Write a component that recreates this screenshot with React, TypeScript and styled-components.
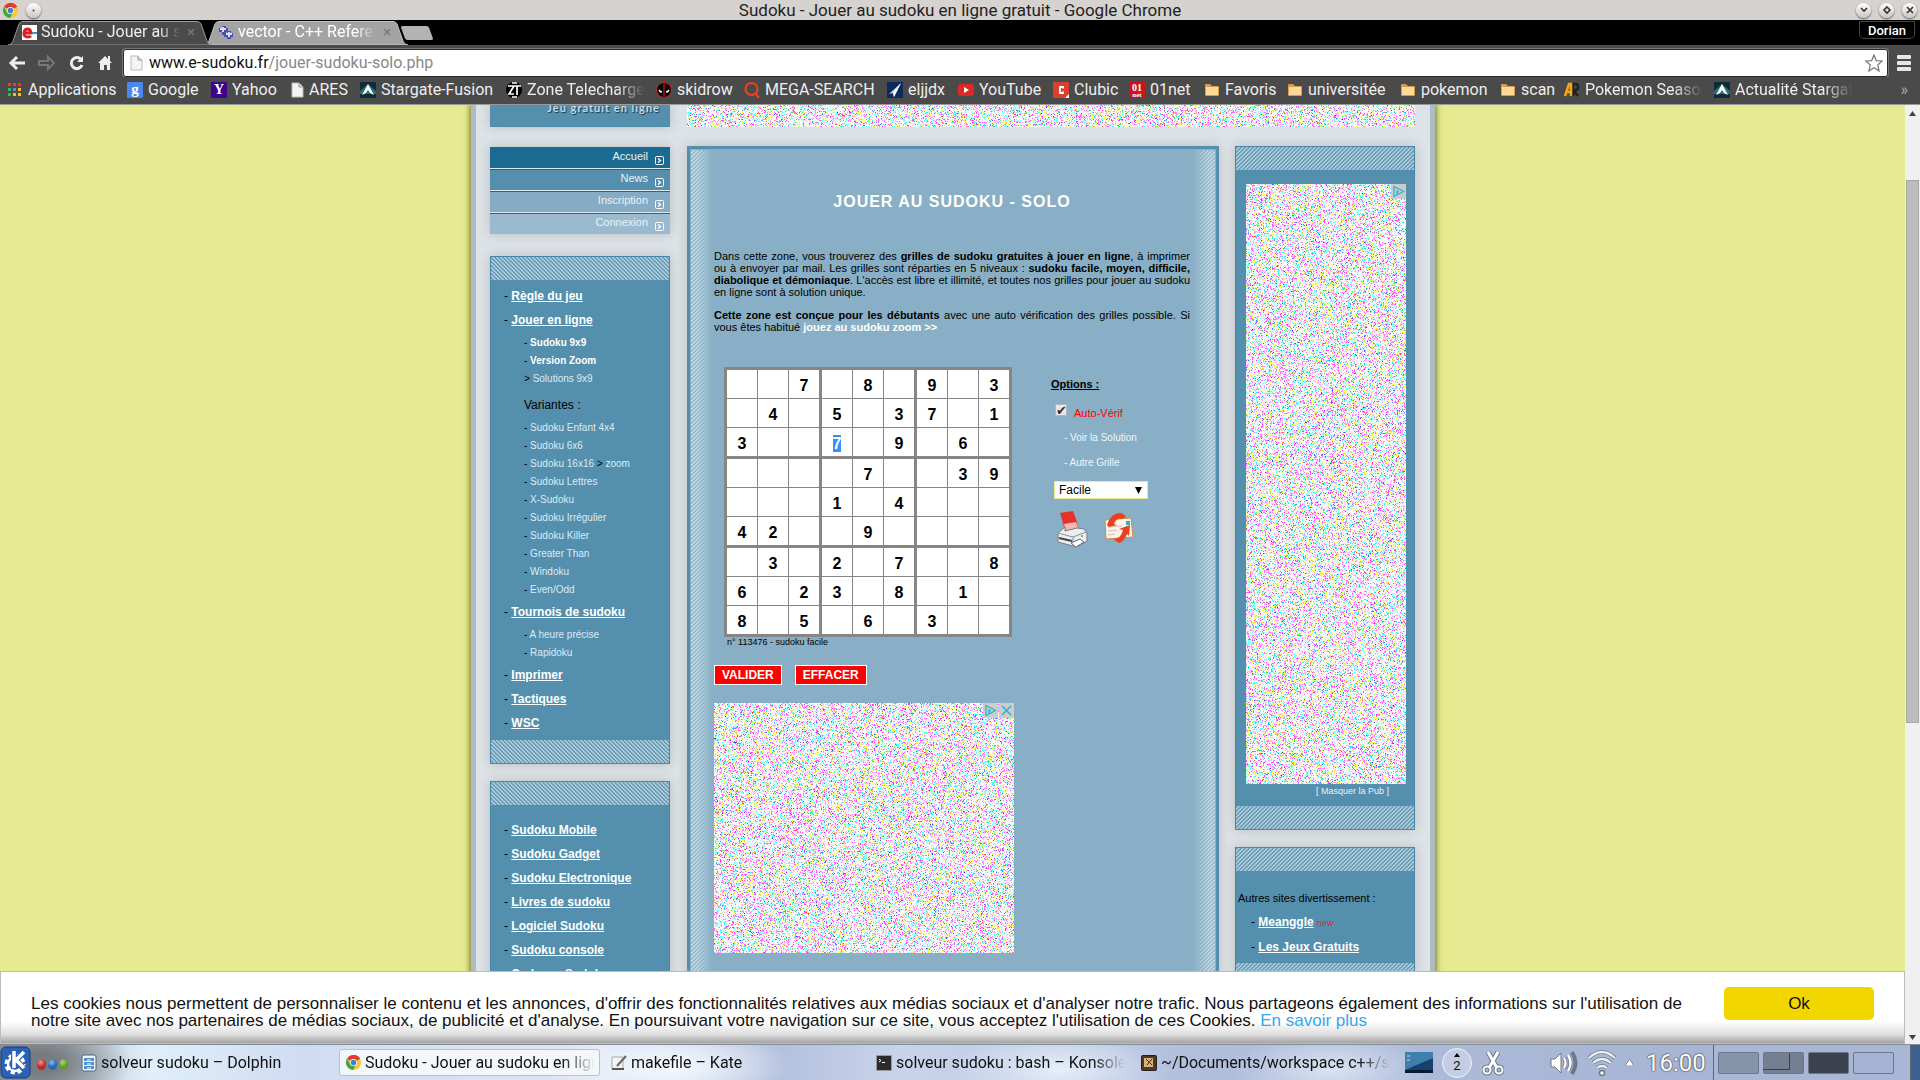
import React, { useEffect, useRef } from "react";
import styled, { createGlobalStyle, css } from "styled-components";

const UI = `Roboto, "Noto Sans", sans-serif`;
const WEB = `"Liberation Sans", Arial, sans-serif`;
const BLUE = "#548fad";

const Global = createGlobalStyle`
  * { box-sizing: border-box; }
  html, body, #root { height: 100%; margin: 0; }
  body { overflow: hidden; font-family: ${WEB}; background: #e6ea90; }
  ul, p, h1 { margin: 0; padding: 0; }
  ul { list-style: none; }
  button { font-family: inherit; padding: 0; border: 0; background: none; }
  svg { display: block; flex: none; }
`;

const Desktop = styled.div`
  display: flex;
  flex-direction: column;
  height: 100vh;
`;

/* ---------- window frame ---------- */

const TitleBar = styled.header`
  flex: none;
  display: grid;
  grid-template-columns: 1fr auto 1fr;
  align-items: center;
  height: 20px;
  padding: 0 3px;
  background: #d6d2cf;
  color: #222;
  font: 17px/20px ${UI};
`;

const TitleSide = styled.div<{ $end?: boolean }>`
  display: flex;
  align-items: center;
  gap: 8px;
  justify-content: ${(p) => (p.$end ? "flex-end" : "flex-start")};
`;

const RoundButton = styled.button`
  display: grid;
  place-items: center;
  width: 15px;
  height: 15px;
  border-radius: 50%;
  background: linear-gradient(#fff, #c9c5c2);
  box-shadow: 0 1px 2px #555;
`;

const TabStrip = styled.nav`
  flex: none;
  display: flex;
  height: 25px;
  padding: 1px 5px 0 8px;
  background: #000;
`;

const Tab = styled.div<{ $active?: boolean }>`
  position: relative;
  z-index: ${(p) => (p.$active ? 1 : 0)};
  display: flex;
  align-items: center;
  gap: 4px;
  width: 204px;
  height: 24px;
  margin-right: -8px;
  padding: 0 14px 2px 14px;
  color: ${(p) => (p.$active ? "#eee" : "#fff")};
  font: 16px/22px ${UI};
`;

const TabShape = styled.svg`
  position: absolute;
  inset: 0;
  z-index: -1;
`;

const TabText = styled.a`
  flex: 1;
  overflow: hidden;
  white-space: nowrap;
  color: inherit;
  text-decoration: none;
  mask-image: linear-gradient(90deg, #000 85%, transparent);
`;

const TabClose = styled.button`
  width: 14px;
  color: #777;
  font-size: 15px;
  line-height: 20px;
`;

const NewTab = styled.button`
  width: 28px;
  height: 14px;
  margin: 5px 0 0 3px;
  border-radius: 2px;
  background: #b3b3b3;
  transform: skewX(20deg);
`;

const UserBadge = styled.button`
  width: 56px;
  height: 18px;
  margin-left: auto;
  border: 1px solid #444;
  border-radius: 0 0 5px 5px;
  color: #fff;
  font: 500 13px/15px ${UI};
`;

const Toolbar = styled.div`
  flex: none;
  display: flex;
  align-items: center;
  height: 32px;
  padding: 3px 8px 0 8px;
  background: #4a4a4a;
`;

const NavButtons = styled.div`
  display: flex;
  gap: 12px;
  width: 115px;
`;

const UrlBox = styled.div`
  flex: 1;
  display: flex;
  align-items: center;
  gap: 6px;
  height: 28px;
  padding: 0 4px 0 6px;
  border: 1px solid #2c2c2c;
  border-radius: 3px;
  background: #fff;
  box-shadow: 0 0 0 1px #777;
  color: #888;
  font: 16px/24px ${UI};
`;

const UrlText = styled.span`
  flex: 1;
  b { font-weight: 400; color: #111; }
`;

const MenuButton = styled.button`
  display: grid;
  gap: 2px;
  width: 14px;
  margin: 0 1px 0 9px;
  i { height: 4px; border-radius: 1px; background: #e6e6e6; }
`;

const Bookmarks = styled.nav`
  flex: none;
  display: flex;
  align-items: center;
  height: 28px;
  padding: 0 12px 2px 7px;
  border-bottom: 1px solid #999;
  background: #4a4a4a;
  color: #eee;
  font: 16px/24px ${UI};
`;

const Bookmark = styled.a<{ $fade?: boolean; $w: number }>`
  flex: none;
  display: flex;
  align-items: center;
  gap: 5px;
  width: ${(p) => p.$w}px;
  color: inherit;
  text-decoration: none;
  white-space: nowrap;
  span {
    ${(p) =>
      p.$fade &&
      css`
        width: 118px;
        overflow: hidden;
        mask-image: linear-gradient(90deg, #000 75%, transparent);
      `}
  }
`;

const More = styled.button`
  margin-left: auto;
  color: #aaa;
  font-size: 16px;
`;

/* ---------- web page ---------- */

const Viewport = styled.div`
  position: relative;
  flex: 1;
  min-height: 0;
  display: flex;
  overflow: hidden;
`;

const PageArea = styled.main`
  flex: 1;
  display: flex;
  justify-content: center;
  padding-left: 1px;
  overflow: hidden;
  background: #e6ea90;
`;

const Sheet = styled.div`
  width: 964px;
  height: max-content;
  min-height: 100%;
  padding: 0 15px 0 14px;
  border: solid #adbbc5;
  border-width: 0 5px;
  background: #dde2e6;
  box-shadow: 0 0 6px 1px #6d7020;
`;

const Row = styled.div`
  display: flex;
  justify-content: space-between;
`;

const shadow = "0 0 10px rgba(60, 60, 60, 0.22)";

const Logo = styled.div`
  width: 180px;
  height: 22px;
  padding-right: 10px;
  background: ${BLUE};
  border-bottom: 1px solid #4787a8;
  box-shadow: ${shadow};
  color: #c3dcea;
  text-align: right;
  font: 700 11px/6px Lato, sans-serif;
  letter-spacing: 1px;
  text-shadow: 1px 1px 1px #234;
`;

const Columns = styled.div`
  display: grid;
  grid-template-columns: 180px 1fr 180px;
  column-gap: 16px;
  margin-top: 19px;
`;

const Side = styled.aside<{ $top?: number }>`
  display: flex;
  flex-direction: column;
  padding-top: ${(p) => p.$top || 0}px;
`;

const TopMenu = styled.ul`
  margin-bottom: 22px;
  box-shadow: ${shadow};
`;

const TopItem = styled.li<{ $bg: string }>`
  height: 22px;
  background: ${(p) => p.$bg};
  border-bottom: 1px solid #dcebf3;
  box-shadow: inset 0 1px #1b6a91;
  &:last-child { height: 21px; border: 0; }
  a {
    display: flex;
    justify-content: flex-end;
    gap: 7px;
    padding-right: 6px;
    color: #e9f2f7;
    font-size: 11px;
    line-height: 18px;
    text-decoration: none;
  }
  svg { margin-top: 9px; }
`;

const hatch = (angle: string) => css`
  background: linear-gradient(${angle}, #abc9d7 25%, #6b9fb9 25% 50%, #abc9d7 50% 75%, #6b9fb9 75%) 0 0 / 4px 4px;
`;

const Box = styled.section<{ $right?: boolean; $gap: number }>`
  margin-bottom: ${(p) => p.$gap}px;
  border: 1px solid #4787a8;
  background: ${BLUE};
  box-shadow: ${shadow};
  &::before,
  &::after {
    content: "";
    display: block;
    height: 23px;
    ${(p) => hatch(p.$right ? "-45deg" : "45deg")}
  }
`;

const MainLinks = styled.ul<{ $top: number }>`
  padding: ${(p) => p.$top}px 0 5px 13px;
  font-size: 12px;
  line-height: 24px;
  a { color: #fff; font-weight: 700; }
`;

const SubLinks = styled.ul`
  padding: 2px 0 1px 20px;
  font-size: 10px;
  line-height: 18px;
  a { color: #dcebf5; font-weight: 400; text-decoration: none; }
  b a { color: #fff; font-weight: 700; }
`;

const Heading = styled.li`
  padding-top: 5px;
  padding-bottom: 2px;
  font-size: 12px;
  line-height: 24px;
`;

const Center = styled.section`
  position: relative;
  margin-left: 1px;
  border: 3px solid ${BLUE};
  padding: 43px 26px 60px 24px;
  background: #88afc5;
  box-shadow: ${shadow};
`;

const Edge = styled.div<{ $right?: boolean }>`
  position: absolute;
  top: 1px;
  bottom: 0;
  ${(p) => (p.$right ? "right: 1px;" : "left: 1px;")}
  width: 22px;
  background: linear-gradient(-45deg, #c0d7e2 25%, #98bacc 25% 50%, #c0d7e2 50% 75%, #98bacc 75%) 0 0 / 4px 4px;
  mask-image: linear-gradient(${(p) => (p.$right ? "-90deg" : "90deg")}, #000 30%, transparent);
`;

const Title = styled.h1`
  color: #fff;
  font-size: 16px;
  line-height: 20px;
  letter-spacing: 1px;
  text-align: center;
`;

const Text = styled.p<{ $top: number }>`
  margin-top: ${(p) => p.$top}px;
  font-size: 11px;
  line-height: 12px;
  text-align: justify;
  a { color: #fff; font-weight: 700; text-decoration: none; }
`;

const Game = styled.div`
  display: flex;
  gap: 39px;
  margin-top: 34px;
  padding-left: 10px;
`;

const Grid = styled.table`
  border: 3px solid #868686;
  border-spacing: 0;
  background: #fff;
`;

const Cell = styled.td<{ $r: number; $c: number }>`
  width: ${(p) => (p.$c === 8 ? 30 : p.$c % 3 === 2 ? 33 : 31)}px;
  height: ${(p) => (p.$r === 8 ? 28 : p.$r % 3 === 2 ? 31 : 29)}px;
  padding: 2px 0 0;
  border: solid #868686;
  border-width: 0 ${(p) => (p.$c === 8 ? 0 : p.$c % 3 === 2 ? 3 : 1)}px ${(p) => (p.$r === 8 ? 0 : p.$r % 3 === 2 ? 3 : 1)}px 0;
  text-align: center;
  font-size: 16px;
  line-height: 17px;
  font-weight: 700;
  mark { background: #3390ff; color: #fff; }
  input {
    display: block;
    width: 100%;
    height: 17px;
    padding: 0;
    border: 0;
    background: none;
    font: inherit;
    text-align: center;
  }
`;

const GridNote = styled.div`
  padding-left: 3px;
  font-size: 9px;
  line-height: 10px;
`;

const Options = styled.div`
  display: flex;
  flex-direction: column;
  align-items: flex-start;
  padding-top: 11px;
  font-size: 11px;
  line-height: 12px;
  a { color: #f0f6fa; font-size: 10px; text-decoration: none; }
`;

const OptTitle = styled.b`
  text-decoration: underline;
`;

const Check = styled.label`
  display: flex;
  gap: 7px;
  margin: 14px 0 13px 4px;
  color: #f00;
  span { padding-top: 3px; }
  input {
    appearance: none;
    display: grid;
    place-items: center;
    width: 12px;
    height: 12px;
    margin: 0;
    border: 1px solid #b5b5b5;
    background: #e6e6e6;
    color: #333;
  }
  input:checked::after { content: "✔"; font: 13px/12px "DejaVu Sans", sans-serif; }
`;

const OptLink = styled.a`
  margin: 0 0 13px 13px;
  & + & { margin-bottom: 12px; }
`;

const Level = styled.div`
  position: relative;
  margin-left: 3px;
  select {
    appearance: none;
    display: block;
    width: 94px;
    height: 18px;
    padding: 0 4px;
    border: 1px solid #e6ea90;
    border-radius: 0;
    background: #fff;
    color: #000;
    font: 12px/16px ${WEB};
  }
  svg { position: absolute; right: 6px; top: 6px; }
`;

const IconRow = styled.div`
  display: flex;
  gap: 16px;
  margin: 12px 0 0 5px;
`;

const Actions = styled.div`
  display: flex;
  gap: 13px;
  margin: 18px 0;
  button {
    height: 20px;
    padding: 0 7px;
    border: 1px solid #fff;
    background: #f00;
    color: #fff;
    font-size: 12px;
    font-weight: 700;
    line-height: 18px;
  }
`;

const AdFrame = styled.div`
  position: relative;
  width: max-content;
  canvas { display: block; }
`;

const AdTools = styled.div`
  position: absolute;
  top: 0;
  right: 0;
  display: flex;
  gap: 1px;
  button { width: 15px; height: 15px; background: #ccc; }
`;

const AdSide = styled.div`
  padding: 14px 0 8px 10px;
`;

const HideAd = styled.a`
  display: block;
  padding-right: 25px;
  color: #e9f2f7;
  font-size: 9px;
  line-height: 14px;
  text-align: right;
  text-decoration: none;
`;

const Others = styled.div`
  padding: 19px 0 0 2px;
  font-size: 11px;
  line-height: 16px;
  small { color: #e8192c; font-size: 9px; font-weight: 400; }
  ul { padding-bottom: 4px; }
`;

const ScrollBar = styled.div`
  display: flex;
  flex-direction: column;
  align-items: center;
  width: 15px;
  padding: 6px 0 4px;
  background: #f0f0f0;
`;

const Thumb = styled.div`
  width: 13px;
  height: 543px;
  margin: 64px 0 auto;
  border: 1px solid #a8a8a8;
  background: #bcbcbc;
`;

const Cookies = styled.div`
  position: absolute;
  left: 0;
  right: 15px;
  bottom: 0;
  display: flex;
  align-items: flex-start;
  justify-content: space-between;
  height: 73px;
  padding: 15px 30px 0;
  border: 1px solid #bbb;
  background: linear-gradient(#fff 70%, #dedede 88%, #a4a4a4);
  color: #111;
  font-size: 17px;
  line-height: 17px;
  p { max-width: 1664px; padding-top: 8px; }
  a { color: #31a8f0; text-decoration: none; }
  button {
    flex: none;
    width: 150px;
    height: 33px;
    border-radius: 5px;
    background: #f2d600;
    color: #111;
    font-size: 17px;
  }
`;

/* ---------- desktop panel ---------- */

const Panel = styled.footer`
  flex: none;
  display: flex;
  align-items: center;
  height: 36px;
  border-top: 1px solid #858b95;
  background:
    radial-gradient(ellipse 90px 50px at 40px 50%, #777c80 20%, transparent),
    radial-gradient(ellipse 120px 40px at 670px 60%, #f7fbff, transparent),
    radial-gradient(ellipse 110px 40px at 1060px 70%, #e6eefa, transparent),
    radial-gradient(ellipse 100px 40px at 1330px 70%, #d9e3f2, transparent),
    linear-gradient(90deg, #9aa2a8, #e0effa 150px, #cfdcf2 300px, #dfe7f5 600px, #b4c1de 780px, #c9d4ea 900px, #b0bddb 1220px, #a3b2d2);
  color: #111;
  font: 16px/24px ${UI};
`;

const KMenu = styled.button`
  width: 31px;
  height: 36px;
`;

const Dots = styled.div`
  display: flex;
  gap: 2px;
  width: 43px;
  padding: 3px 0 0 6px;
`;

const Ball = styled.button<{ $c: string }>`
  width: 9px;
  height: 11px;
  border-radius: 50%;
  background: radial-gradient(circle at 40% 30%, #fff8, transparent 50%), ${(p) => p.$c};
`;

const Tasks = styled.div`
  flex: 1;
  min-width: 0;
  display: grid;
  grid-template-columns: repeat(5, minmax(0, 1fr));
  gap: 4px;
`;

const Task = styled.button<{ $active?: boolean }>`
  display: flex;
  align-items: center;
  gap: 4px;
  min-width: 0;
  height: 27px;
  padding: 0 4px 0 6px;
  border: 1px solid ${(p) => (p.$active ? "#b9c0ca" : "transparent")};
  border-radius: 3px;
  background: ${(p) => (p.$active ? "#f3f6fb" : "none")};
  color: #111;
  font: 16px/24px ${UI};
  span {
    flex: 1;
    overflow: hidden;
    text-align: left;
    white-space: nowrap;
    mask-image: linear-gradient(90deg, #000 86%, transparent);
  }
`;

const Tray = styled.div`
  display: flex;
  align-items: center;
  width: 318px;
  padding-left: 10px;
`;

const Spacer = styled.div<{ $w: number }>`
  width: ${(p) => p.$w}px;
`;

const Workspace = styled.div`
  display: grid;
  place-items: center;
  align-content: center;
  gap: 2px;
  width: 30px;
  height: 30px;
  border: 1px solid #eef2fa;
  border-radius: 50%;
  background: #c3cee4;
  font: 13px/13px ${UI};
`;

const Clock = styled.time`
  color: #fff;
  font: 24px/30px ${UI};
  text-shadow: 0 0 2px #333, 0 0 1px #333;
`;

const Pager = styled.div`
  display: flex;
  align-items: center;
  gap: 4px;
  height: 36px;
  padding: 0 16px 0 4px;
  border-left: 1px solid #5d6675;
  border-right: 1px solid #5d6675;
  background: #a9b7d6;
`;

const Desk = styled.button<{ $c: string }>`
  width: 41px;
  height: 22px;
  border: 1px solid #6b7689;
  border-radius: 2px;
  background: ${(p) => p.$c};
  i {
    display: block;
    width: 27px;
    height: 17px;
    margin: -3px 0 0 -1px;
    border: solid #3a4250;
    border-width: 0 1px 1px 0;
  }
`;

const PanelEnd = styled.div`
  width: 9px;
  height: 36px;
  background: #3d618e;
`;

/* ---------- drawings ---------- */

function Noise({ w, h, seed }: { w: number; h: number; seed: number }) {
  const ref = useRef<HTMLCanvasElement>(null);
  useEffect(() => {
    const ctx = ref.current!.getContext("2d")!;
    const img = ctx.createImageData(w, h);
    let s = seed;
    const rnd = () => {
      s = (Math.imul(s, 1664525) + 1013904223) >>> 0;
      return s / 4294967296;
    };
    for (let i = 0; i < img.data.length; i += 4) {
      for (let c = 0; c < 3; c++) {
        const drop = rnd() < (c === 1 ? 0.22 : c === 0 ? 0.19 : 0.15);
        img.data[i + c] = drop ? 50 + rnd() * 160 : 255 - rnd() * 8;
      }
      img.data[i + 3] = 255;
    }
    ctx.putImageData(img, 0, 0);
  }, [w, h, seed]);
  return <canvas ref={ref} width={w} height={h} />;
}

const Chrome = ({ size = 15 }: { size?: number }) => (
  <svg width={size} height={size} viewBox="0 0 16 16">
    <circle cx="8" cy="8" r="8" fill="#f7c92b" />
    <path d="M8 8 1 4a8 8 0 0 1 14 0z" fill="#e13b2e" />
    <path d="M8 0a8 8 0 0 1 7 4H8z" fill="#e13b2e" />
    <path d="M1 4a8 8 0 0 0 6.500 12L11 9 8 11 4.500 10z" fill="#3fa648" />
    <circle cx="8" cy="8" r="3.800" fill="#fff" />
    <circle cx="8" cy="8" r="3" fill="#3f7fd6" />
  </svg>
);

const MenuArrow = () => (
  <svg width="9" height="9" viewBox="0 0 9 9" fill="none" stroke="#fff">
    <rect x=".5" y=".5" width="8" height="8" rx="1" />
    <path d="m3 2.500 2.500 2L3 6.500" strokeWidth="1.300" />
  </svg>
);

const iconText = (t: string, bg: string, fg: string, size = 12) => (
  <svg width="16" height="16">
    <rect width="16" height="16" rx="1" fill={bg} />
    <text x="8" y="12" textAnchor="middle" fontFamily="Liberation Serif, serif" fontWeight="700" fontSize={size} fill={fg}>{t}</text>
  </svg>
);

const folder = (
  <svg width="16" height="16" viewBox="0 0 16 16">
    <path d="M1 3q0-1 1-1h4l2 2h6q1 0 1 1v8q0 1-1 1H2q-1 0-1-1z" fill="#d99a4a" />
    <rect x="2" y="5" width="12" height="8" fill="#ffd99a" />
  </svg>
);

const star = (
  <svg width="16" height="16" viewBox="0 0 16 16">
    <rect width="16" height="16" fill="#0d2c33" />
    <path d="M0 9 8 2l8 7v3H0z" fill="#3b9aa5" opacity=".6" />
    <path d="m8 2 6 11-4-2-2-3-2 3-4 2z" fill="#fff" />
  </svg>
);

const page = (
  <svg width="13" height="16" viewBox="0 0 13 16">
    <path d="M1 1h7l4 4v10H1z" fill="#f4f4f4" stroke="#bbb" />
    <path d="M8 1v4h4" fill="#ddd" stroke="#999" />
  </svg>
);

const apps = (
  <svg width="16" height="16" viewBox="0 0 16 16">
    {["#f33", "#f33", "#f33", "#3b5", "#39f", "#fb2", "#3b5", "#fb2", "#fb2"].map((c, i) => (
      <rect key={i} x={1 + (i % 3) * 5} y={1 + Math.floor(i / 3) * 5} width="3" height="3" fill={c} />
    ))}
  </svg>
);

const skidrow = (
  <svg width="16" height="16" viewBox="0 0 16 16">
    <circle cx="8" cy="8" r="7.500" fill="#080808" stroke="#c22" />
    <path d="M8 0v16" stroke="#a11" strokeWidth="1.500" />
    <path d="m3 8 3 2H4zM13 8l-3 2h2z" fill="#fff" stroke="#fff" />
  </svg>
);

const search = (
  <svg width="16" height="16" viewBox="0 0 16 16" fill="none" stroke="#e8421e" strokeWidth="2.200">
    <circle cx="7.500" cy="7" r="6" />
    <path d="m11 11 4 5" />
  </svg>
);

const plane = (
  <svg width="16" height="16" viewBox="0 0 16 16">
    <rect width="16" height="16" fill="#0b2b5c" />
    <path d="M14 1 2 12l4-1 1 4z" fill="#cfd8e2" />
    <path d="M14 1 6 11l1 4z" fill="#fff" />
  </svg>
);

const youtube = (
  <svg width="16" height="16" viewBox="0 0 16 16">
    <rect y="2" width="16" height="12" rx="3" fill="#dd2826" />
    <path d="m6 5 5 3-5 3z" fill="#fff" />
  </svg>
);

const clubic = (
  <svg width="16" height="16" viewBox="0 0 16 16">
    <rect width="16" height="16" fill="#d9402f" />
    <path d="M10 6.500V5H7v6h3V9.500" fill="none" stroke="#fff" strokeWidth="1.800" />
    <path d="M16 12v4h-4z" fill="#fff" />
  </svg>
);

const zt = (
  <svg width="16" height="16" viewBox="0 0 16 16">
    <circle cx="8" cy="8" r="8" fill="#000" />
    <path d="M2 4h6l-5 8h5M6 4h9M11 4v9M6 1h5M6 15h5" fill="none" stroke="#fff" strokeWidth="1.700" />
  </svg>
);

const ar = (
  <svg width="16" height="16" viewBox="0 0 16 16" fill="none" strokeWidth="2.600">
    <path d="M9 14V2h3q2 0 2 3t-2 3H9l5 6" stroke="#222" />
    <path d="M1 14 5 2h2v12M3 10h4" stroke="#f5a31c" />
  </svg>
);

const net = (
  <svg width="16" height="16">
    <rect width="16" height="16" fill="#c8151b" />
    <text x="8" y="9" textAnchor="middle" fontFamily="Liberation Serif, serif" fontWeight="700" fontSize="10" fill="#fff">01</text>
    <text x="8" y="15" textAnchor="middle" fontFamily="Liberation Serif, serif" fontWeight="700" fontSize="7" fill="#fff">net</text>
  </svg>
);

const marks: [string, React.ReactNode, number, boolean?][] = [
  ["Applications", apps, 120],
  ["Google", iconText("g", "#4787ee", "#fff", 15), 84],
  ["Yahoo", iconText("Y", "#400090", "#fff", 14), 80],
  ["ARES", page, 69],
  ["Stargate-Fusion", star, 146],
  ["Zone Telecharger", zt, 150, true],
  ["skidrow", skidrow, 88],
  ["MEGA-SEARCH", search, 143],
  ["eljjdx", plane, 71],
  ["YouTube", youtube, 95],
  ["Clubic", clubic, 76],
  ["01net", net, 75],
  ["Favoris", folder, 83],
  ["universitée", folder, 113],
  ["pokemon", folder, 100],
  ["scan", folder, 64],
  ["Pokemon Season", ar, 150, true],
  ["Actualité Stargate", star, 140, true],
];

const rows = ["007080903", "040503701", "300709060", "000070039", "000104000", "420090000", "030207008", "602308010", "805060300"];

const variants = ["Sudoku Lettres", "X-Sudoku", "Sudoku Irrégulier", "Sudoku Killer", "Greater Than", "Windoku", "Even/Odd"];
const products = ["Sudoku Mobile", "Sudoku Gadget", "Sudoku Electronique", "Livres de sudoku", "Logiciel Sudoku", "Sudoku console", "Cadeaux Sudoku"];

const Play = () => (
  <svg width="15" height="15" viewBox="0 0 15 15" fill="none" stroke="#2db4cc" strokeWidth="1.300">
    <path d="M3 2.500v10l9.500-5zM6 6v5M6 8.500l2-1" />
  </svg>
);

const Link = ({ children }: { children: React.ReactNode }) => <a href="#">{children}</a>;

function Browser() {
  return (
    <>
      <TitleBar>
        <TitleSide>
          <Chrome />
          <RoundButton aria-label="Épingler"><svg width="3" height="3"><circle cx="1.500" cy="1.500" r="1" fill="#444" /></svg></RoundButton>
        </TitleSide>
        <span>Sudoku - Jouer au sudoku en ligne gratuit - Google Chrome</span>
        <TitleSide $end>
          {["m2 3 3 3 3-3", "m5 2 3 3-3 3-3-3z", "m2 2 6 6M8 2 2 8"].map((d) => (
            <RoundButton key={d} aria-label="Fenêtre">
              <svg width="10" height="10" fill="none" stroke="#333" strokeWidth="1.600"><path d={d} /></svg>
            </RoundButton>
          ))}
        </TitleSide>
      </TitleBar>
      <TabStrip>
        <Tab $active>
          <TabShape width="204" height="24"><path d="M0 24q4 0 5-4L11 3q1-2.500 4-2.500h174q3 0 4 2.500l6 17q1 4 5 4z" fill="#4a4a4a" stroke="#999" /></TabShape>
          <svg width="15" height="15" viewBox="0 0 15 15">
            <rect width="15" height="15" fill="#fff" />
            <path d="M3 8h6q-.5-4-3.500-4T2 8t4 4q2 0 3-1" fill="none" stroke="#dc1f26" strokeWidth="3" />
            <path d="M10 8h5" stroke="#4a90c0" strokeWidth="2" />
          </svg>
          <TabText href="#">Sudoku - Jouer au sudoku</TabText>
          <TabClose aria-label="Fermer">×</TabClose>
        </Tab>
        <Tab>
          <TabShape width="204" height="24"><path d="M0 24q4 0 5-4L11 3q1-2.500 4-2.500h174q3 0 4 2.500l6 17q1 4 5 4z" fill="#a3a3a3" stroke="#c4c4c4" /></TabShape>
          <svg width="16" height="15" viewBox="0 0 16 15" fill="none" stroke="#4a4fb0" strokeWidth="4">
            <path d="M1 5h9M6 1v9M6 10h9M11 6v8" />
            <path d="M2 4h6M5 2v5M8 9h6M11 7v5" stroke="#d8dcff" strokeWidth="2" />
          </svg>
          <TabText href="#">vector - C++ Reference</TabText>
          <TabClose aria-label="Fermer">×</TabClose>
        </Tab>
        <NewTab aria-label="Nouvel onglet" />
        <UserBadge>Dorian</UserBadge>
      </TabStrip>
      <Toolbar>
        <NavButtons>
          <button aria-label="Précédent"><svg width="18" height="18" fill="none" stroke="#eee" strokeWidth="3"><path d="M17 9H4M9 3 3 9l6 6" /></svg></button>
          <button aria-label="Suivant"><svg width="18" height="18" fill="none" stroke="#777" strokeWidth="2"><path d="M1 7h9V3l6 6-6 6v-4H1z" /></svg></button>
          <button aria-label="Actualiser"><svg width="17" height="18" fill="none" stroke="#eee" strokeWidth="3"><path d="M13 5.500A5.500 5.500 0 1 0 14 11" /><path d="M15 2v6H9z" fill="#eee" stroke="none" /></svg></button>
          <button aria-label="Accueil"><svg width="16" height="18" fill="#eee"><path d="m8 2 7 7h-2v7h-3v-5H7v5H3V9H1z" /><path d="M11 2h2v5h-2z" /></svg></button>
        </NavButtons>
        <UrlBox>
          {page}
          <UrlText><b>www.e-sudoku.fr</b>/jouer-sudoku-solo.php</UrlText>
          <svg width="18" height="18" viewBox="0 0 18 18" fill="none" stroke="#777" strokeWidth="1.200"><path d="m9 1 2.300 5.600 5.900.4-4.500 4 1.400 6L9 13.800 3.900 17l1.400-6-4.500-4 5.900-.4z" /></svg>
        </UrlBox>
        <MenuButton aria-label="Menu"><i /><i /><i /></MenuButton>
      </Toolbar>
      <Bookmarks>
        {marks.map(([label, icon, w, fade]) => (
          <Bookmark key={label} href="#" $w={w} $fade={fade}>{icon}<span>{label}</span></Bookmark>
        ))}
        <More>»</More>
      </Bookmarks>
    </>
  );
}

function Navigation() {
  return (
    <Side $top={1}>
      <TopMenu>
        {[["Accueil", "#1b6a91"], ["News", "#548fad"], ["Inscription", "#85acc4"], ["Connexion", "#9abbcf"]].map(([t, c]) => (
          <TopItem key={t} $bg={c}><a href="#">{t}<MenuArrow /></a></TopItem>
        ))}
      </TopMenu>
      <Box $gap={17}>
        <MainLinks $top={4}>
          <li>- <Link>Règle du jeu</Link></li>
          <li>- <Link>Jouer en ligne</Link>
            <SubLinks>
              <li>- <b><Link>Sudoku 9x9</Link></b></li>
              <li>- <b><Link>Version Zoom</Link></b></li>
              <li>&gt; <Link>Solutions 9x9</Link></li>
              <Heading>Variantes :</Heading>
              <li>- <Link>Sudoku Enfant 4x4</Link></li>
              <li>- <Link>Sudoku 6x6</Link></li>
              <li>- <Link>Sudoku 16x16</Link> &gt; <Link>zoom</Link></li>
              {variants.map((v) => <li key={v}>- <Link>{v}</Link></li>)}
            </SubLinks>
          </li>
          <li>- <Link>Tournois de sudoku</Link>
            <SubLinks>
              <li>- <Link>A heure précise</Link></li>
              <li>- <Link>Rapidoku</Link></li>
            </SubLinks>
          </li>
          <li>- <Link>Imprimer</Link></li>
          <li>- <Link>Tactiques</Link></li>
          <li>- <Link>WSC</Link></li>
        </MainLinks>
      </Box>
      <Box $gap={0}>
        <MainLinks $top={13}>
          {products.map((v) => <li key={v}>- <Link>{v}</Link></li>)}
        </MainLinks>
      </Box>
    </Side>
  );
}

function Sudoku() {
  return (
    <Grid>
      <tbody>
        {rows.map((line, r) => (
          <tr key={r}>
            {line.split("").map((d, c) => (
              <Cell key={c} $r={r} $c={c}>
                {d === "0" ? <input aria-label={`Ligne ${r + 1}, colonne ${c + 1}`} maxLength={1} /> : r === 2 && c === 3 ? <mark>{d}</mark> : d}
              </Cell>
            ))}
          </tr>
        ))}
      </tbody>
    </Grid>
  );
}

function Printer() {
  return (
    <svg width="32" height="36" viewBox="0 0 32 36">
      <path d="M4 2 17 0l4 11 1 6-13 3-2-8z" fill="#e5332c" />
      <path d="m8 13 12-2 2 6-12 4z" fill="#f6b8b0" />
      <path d="m2 22 7-6v4l12-3 7 1 3 4v8l-10 6L2 31z" fill="#eceef0" stroke="#777d84" />
      <path d="m2 22 15 4 13-5M17 26v8" fill="none" stroke="#888f96" />
      <path d="m3 27 13 3" stroke="#444" strokeWidth="2" />
      <path d="m15 32 9-4 4 3-8 5z" fill="#fff" stroke="#668" />
      <circle cx="26" cy="25" r="1" fill="#3b3" />
    </svg>
  );
}

function Mail() {
  return (
    <svg width="30" height="34" viewBox="0 0 30 34">
      <path d="m1 8 26-2 2 19-27 2z" fill="#fdf3e8" stroke="#d7894a" />
      <path d="m4 15 14-1M4 19l9-1M4 23l7-1" stroke="#d0bcbc" />
      <rect x="22" y="9" width="4" height="4" fill="#2bb5c0" />
      <path d="M3 13Q7 1 16 1q3 0 6 4l-4 2q-5-2-8 5l3 1-8 2z" fill="#e9401f" />
      <path d="M9 27q8 0 10-9l-4-1 11-4-1 11-2-2q-3 8-8 9z" fill="#e9401f" />
    </svg>
  );
}

function CenterPanel() {
  return (
    <Center>
      <Edge /><Edge $right />
      <Title>JOUER AU SUDOKU - SOLO</Title>
      <Text $top={38}>
        Dans cette zone, vous trouverez des <b>grilles de sudoku gratuites à jouer en ligne</b>, à imprimer ou à envoyer par mail. Les grilles sont réparties en 5 niveaux : <b>sudoku facile, moyen, difficile, diabolique et démoniaque</b>. L'accès est libre et illimité, et toutes nos grilles pour jouer au sudoku en ligne sont à solution unique.
      </Text>
      <Text $top={11}>
        <b>Cette zone est conçue pour les débutants</b> avec une auto vérification des grilles possible. Si vous êtes habitué <Link>jouez au sudoku zoom &gt;&gt;</Link>
      </Text>
      <Game>
        <div>
          <Sudoku />
          <GridNote>n° 113476 - sudoku facile</GridNote>
        </div>
        <Options>
          <OptTitle>Options :</OptTitle>
          <Check><input type="checkbox" defaultChecked /><span>Auto-Vérif</span></Check>
          <OptLink href="#">- Voir la Solution</OptLink>
          <OptLink href="#">- Autre Grille</OptLink>
          <Level>
            <select aria-label="Niveau" defaultValue="Facile"><option>Facile</option><option>Moyen</option><option>Difficile</option></select>
            <svg width="7" height="7"><path d="M0 0h7L3.500 7z" /></svg>
          </Level>
          <IconRow>
            <button aria-label="Imprimer"><Printer /></button>
            <button aria-label="Envoyer"><Mail /></button>
          </IconRow>
        </Options>
      </Game>
      <Actions><button>VALIDER</button><button>EFFACER</button></Actions>
      <AdFrame>
        <Noise w={300} h={250} seed={77} />
        <AdTools>
          <button aria-label="Choix"><Play /></button>
          <button aria-label="Fermer"><svg width="15" height="15" stroke="#2db4cc" strokeWidth="1.500"><path d="m3 3 9 9M12 3l-9 9" /></svg></button>
        </AdTools>
      </AdFrame>
    </Center>
  );
}

function Promo() {
  return (
    <Side>
      <Box $right $gap={17}>
        <AdSide>
          <AdFrame>
            <Noise w={160} h={600} seed={991} />
            <AdTools><button aria-label="Choix"><Play /></button></AdTools>
          </AdFrame>
          <HideAd href="#">[ Masquer la Pub ]</HideAd>
        </AdSide>
      </Box>
      <Box $right $gap={0}>
        <Others>
          Autres sites divertissement :
          <MainLinks $top={4}>
            <li>- <Link>Meanggle</Link> <small>new</small></li>
            <li>- <Link>Les Jeux Gratuits</Link></li>
          </MainLinks>
        </Others>
      </Box>
    </Side>
  );
}

function TaskPanel() {
  return (
    <Panel>
      <KMenu aria-label="Menu K">
        <svg width="31" height="36" viewBox="0 0 31 36">
          <rect x="1" y="2" width="29" height="31" rx="5" fill="#2a62b8" stroke="#123c80" />
          <circle cx="15" cy="19" r="8.500" fill="none" stroke="#fff" strokeWidth="4" strokeDasharray="4 2.700" />
          <circle cx="15" cy="19" r="7" fill="none" stroke="#fff" strokeWidth="2.500" />
          <path d="M14 6v18M24 7l-8 8 8 9" fill="none" stroke="#2a62b8" strokeWidth="6" />
          <path d="M14 6v17M24 7l-8 8 8 8" fill="none" stroke="#fff" strokeWidth="3.500" />
        </svg>
      </KMenu>
      <Dots>{["#c62828", "#2468b8", "#5c9e22"].map((c) => <Ball key={c} $c={c} aria-label="Activité" />)}</Dots>
      <Tasks>
        <Task>
          <svg width="16" height="18" viewBox="0 0 16 18"><rect x="1" y="1" width="14" height="16" rx="2" fill="#eef3f8" stroke="#567" /><path d="M3 4h10v3H3zM3 8h10v3H3zM3 12h10v3H3z" fill="#4e8fd0" /><path d="M6 6h4M6 10h4M6 14h4" stroke="#fff" /></svg>
          <span>solveur sudoku – Dolphin</span>
        </Task>
        <Task $active><Chrome /><span>Sudoku - Jouer au sudoku en ligne gratuit</span></Task>
        <Task>
          <svg width="16" height="16" viewBox="0 0 16 16"><path d="M1 2h11v12H1z" fill="#f4f4f4" stroke="#aaa" /><path d="M1 14h12" stroke="#555" strokeWidth="2" /><path d="M15 1 6 11" stroke="#666" strokeWidth="2" /></svg>
          <span>makefile – Kate</span>
        </Task>
        <Task>
          <svg width="16" height="16" viewBox="0 0 16 16"><rect x=".5" y=".5" width="15" height="15" rx="1" fill="#2b2b2b" stroke="#999" /><path d="m3 4 2 1.500L3 7M6 7.500h3" fill="none" stroke="#fff" /></svg>
          <span>solveur sudoku : bash – Konsole</span>
        </Task>
        <Task>
          <svg width="16" height="16" viewBox="0 0 16 16"><rect x=".5" y=".5" width="15" height="15" rx="1" fill="#4b3a26" stroke="#222" /><path d="M3 3h9v9H3z" fill="#d8b27c" /><path d="m5 4 6 6M11 4l-5 6" stroke="#422" /></svg>
          <span>~/Documents/workspace c++/sudoku</span>
        </Task>
      </Tasks>
      <Tray>
        <svg width="28" height="21"><rect width="28" height="21" fill="#17406f" /><path d="M0 0h28v6L0 18z" fill="#3f7fae" /><rect y="18" width="28" height="3" fill="#0a1a2c" /><path d="M2 4h3M2 8h3" stroke="#cde" /></svg>
        <Spacer $w={9} />
        <Workspace><svg width="6" height="4"><path d="m0 4 3-4 3 4z" /></svg>2</Workspace>
        <Spacer $w={10} />
        <svg width="22" height="26" viewBox="0 0 22 26" fill="none" stroke="#6d7788">
          <path d="M6 2 15 18M16 2 7 18" strokeWidth="5" /><circle cx="5" cy="20" r="3.500" strokeWidth="4" /><circle cx="17" cy="20" r="3.500" strokeWidth="4" />
          <path d="M6 2 15 18M16 2 7 18" stroke="#fff" strokeWidth="3" /><circle cx="5" cy="20" r="3.500" stroke="#fff" strokeWidth="2" /><circle cx="17" cy="20" r="3.500" stroke="#fff" strokeWidth="2" />
        </svg>
        <Spacer $w={46} />
        <svg width="32" height="26" viewBox="0 0 32 26" fill="none" stroke="#6d7788">
          <path d="M1 9h4l6-6v20l-6-6H1z" fill="#fff" />
          <path d="M14 8q3 5 0 10M18 5q5 8 0 16M22 2q7 11 0 22" strokeWidth="4" /><path d="M14 8q3 5 0 10M18 5q5 8 0 16" stroke="#fff" strokeWidth="2.400" />
        </svg>
        <Spacer $w={5} />
        <svg width="30" height="28" viewBox="0 0 30 28" fill="none" stroke="#6d7788" strokeWidth="4">
          <path d="M2 9q13-12 26 0M6 14q9-8 18 0M10 19q5-4 10 0" /><path d="M2 9q13-12 26 0M6 14q9-8 18 0M10 19q5-4 10 0" stroke="#e8edf6" strokeWidth="2.200" /><circle cx="15" cy="24" r="2.500" fill="#fff" strokeWidth="1.500" />
        </svg>
        <Spacer $w={8} />
        <svg width="9" height="7"><path d="m0 7 4.500-7L9 7z" fill="#fff" stroke="#889" /></svg>
        <Spacer $w={12} />
        <Clock>16:00</Clock>
      </Tray>
      <Pager>
        {["#8593ab", "#747f92", "#3b424e", "#a5b4d2"].map((c, i) => <Desk key={c} $c={c} aria-label={`Bureau ${i + 1}`}>{i === 1 && <i />}</Desk>)}
      </Pager>
      <PanelEnd />
    </Panel>
  );
}

export default function App() {
  return (
    <Desktop>
      <Global />
      <Browser />
      <Viewport>
        <PageArea>
          <Sheet>
            <Row>
              <Logo>Jeu gratuit en ligne</Logo>
              <Noise w={728} h={22} seed={5} />
            </Row>
            <Columns>
              <Navigation />
              <CenterPanel />
              <Promo />
            </Columns>
          </Sheet>
        </PageArea>
        <ScrollBar>
          <svg width="7" height="5"><path d="m0 5 3.500-5L7 5z" fill="#444" /></svg>
          <Thumb />
          <svg width="7" height="5"><path d="m0 0 3.500 5L7 0z" fill="#444" /></svg>
        </ScrollBar>
        <Cookies>
          <p>
            Les cookies nous permettent de personnaliser le contenu et les annonces, d'offrir des fonctionnalités relatives aux médias sociaux et d'analyser notre trafic. Nous partageons également des informations sur l'utilisation de notre site avec nos partenaires de médias sociaux, de publicité et d'analyse. En poursuivant votre navigation sur ce site, vous acceptez l'utilisation de ces Cookies. <Link>En savoir plus</Link>
          </p>
          <button>Ok</button>
        </Cookies>
      </Viewport>
      <TaskPanel />
    </Desktop>
  );
}
